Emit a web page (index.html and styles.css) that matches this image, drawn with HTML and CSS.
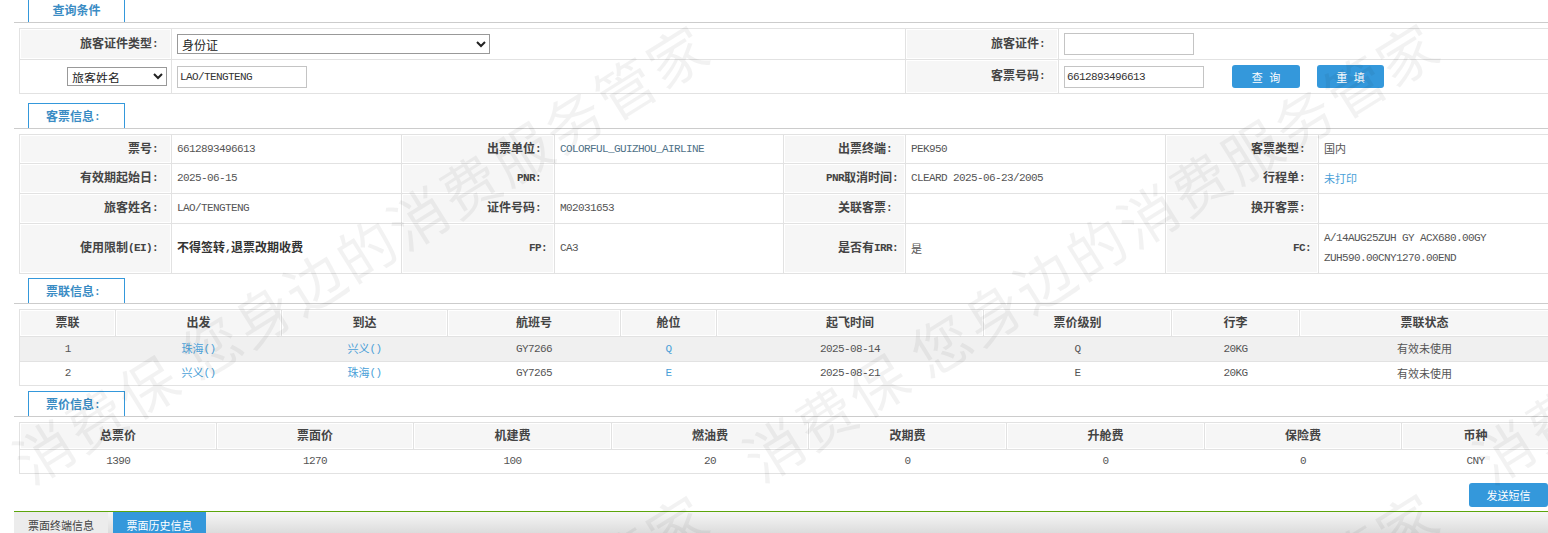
FILE: index.html
```html
<!DOCTYPE html>
<html lang="zh">
<head>
<meta charset="utf-8">
<title>客票信息</title>
<link rel="stylesheet" href="styles.css">
</head>
<body>
<div class="page">
  <div class="sec-head first"><div class="tab">查询条件</div></div>
  <table class="grid t1">
    <colgroup><col class="w152"><col class="w734"><col class="w153"><col class="w491"></colgroup>
    <tr class="h31">
      <td class="lb">旅客证件类型<span class="l">:</span></td>
      <td class="val ctl"><select class="sel-wide"><option>身份证</option></select></td>
      <td class="lb">旅客证件<span class="l">:</span></td>
      <td class="val ctl"><input class="ipt ipt-a" type="text"></td>
    </tr>
    <tr class="h34">
      <td class="plain ctl"><select class="sel-name"><option>旅客姓名</option></select></td>
      <td class="val ctl"><input class="ipt ipt-b" type="text" value="LAO/TENGTENG"></td>
      <td class="lb">客票号码<span class="l">:</span></td>
      <td class="val ctl">
        <div class="actions">
          <input class="ipt ipt-c" type="text" value="6612893496613">
          <button class="btn btn-q" type="button">查 询</button>
          <button class="btn btn-r" type="button">重 填</button>
        </div>
      </td>
    </tr>
  </table>

  <div class="sec-head"><div class="tab tab-c">客票信息<span class="l">:</span></div></div>
  <table class="grid t2">
    <colgroup><col class="w152"><col class="w230"><col class="w153"><col class="w229"><col class="w122"><col class="w260"><col class="w153"><col class="w231"></colgroup>
    <tr class="h29">
      <td class="lb">票号<span class="l">:</span></td><td class="val"><span class="l">6612893496613</span></td>
      <td class="lb">出票单位<span class="l">:</span></td><td class="val"><span class="l unit">COLORFUL_GUIZHOU_AIRLINE</span></td>
      <td class="lb">出票终端<span class="l">:</span></td><td class="val"><span class="l">PEK950</span></td>
      <td class="lb">客票类型<span class="l">:</span></td><td class="val">国内</td>
    </tr>
    <tr class="h30">
      <td class="lb">有效期起始日<span class="l">:</span></td><td class="val"><span class="l">2025-06-15</span></td>
      <td class="lb"><span class="l">PNR:</span></td><td class="val"></td>
      <td class="lb wide-colon"><span class="l">PNR</span>取消时间<span class="l">:</span></td><td class="val"><span class="l">CLEARD 2025-06-23/2005</span></td>
      <td class="lb">行程单<span class="l">:</span></td><td class="val link">未打印</td>
    </tr>
    <tr class="h30">
      <td class="lb">旅客姓名<span class="l">:</span></td><td class="val"><span class="l">LAO/TENGTENG</span></td>
      <td class="lb">证件号码<span class="l">:</span></td><td class="val"><span class="l">M02031653</span></td>
      <td class="lb">关联客票<span class="l">:</span></td><td class="val"></td>
      <td class="lb">换开客票<span class="l">:</span></td><td class="val"></td>
    </tr>
    <tr class="h50">
      <td class="lb">使用限制<span class="l">(EI):</span></td><td class="val strong">不得签转<span class="l">,</span>退票改期收费</td>
      <td class="lb wide-colon"><span class="l">FP:</span></td><td class="val"><span class="l">CA3</span></td>
      <td class="lb wide-colon">是否有<span class="l">IRR:</span></td><td class="val">是</td>
      <td class="lb wide-colon"><span class="l">FC:</span></td>
      <td class="val fc"><div class="l">A/14AUG25ZUH GY ACX680.00GY</div><div class="l">ZUH590.00CNY1270.00END</div></td>
    </tr>
  </table>

  <div class="sec-head"><div class="tab tab-c">票联信息<span class="l">:</span></div></div>
  <table class="grid t3 center">
    <colgroup><col class="w96"><col class="w166"><col class="w166"><col class="w173"><col class="w96"><col class="w267"><col class="w188"><col class="w128"><col class="w250"></colgroup>
    <tr class="h27 head">
      <th>票联</th><th>出发</th><th>到达</th><th>航班号</th><th>舱位</th><th>起飞时间</th><th>票价级别</th><th>行李</th><th>票联状态</th>
    </tr>
    <tr class="h25 alt">
      <td><span class="l">1</span></td><td class="link">珠海<span class="l">()</span></td><td class="link">兴义<span class="l">()</span></td><td><span class="l">GY7266</span></td><td class="link"><span class="l">Q</span></td><td><span class="l">2025-08-14</span></td><td><span class="l">Q</span></td><td><span class="l">20KG</span></td><td>有效未使用</td>
    </tr>
    <tr class="h24">
      <td><span class="l">2</span></td><td class="link">兴义<span class="l">()</span></td><td class="link">珠海<span class="l">()</span></td><td><span class="l">GY7265</span></td><td class="link"><span class="l">E</span></td><td><span class="l">2025-08-21</span></td><td><span class="l">E</span></td><td><span class="l">20KG</span></td><td>有效未使用</td>
    </tr>
  </table>

  <div class="sec-head"><div class="tab tab-c">票价信息<span class="l">:</span></div></div>
  <table class="grid t4 center">
    <colgroup><col class="w197"><col class="w197"><col class="w198"><col class="w197"><col class="w198"><col class="w198"><col class="w197"><col class="w148"></colgroup>
    <tr class="h27 head">
      <th>总票价</th><th>票面价</th><th>机建费</th><th>燃油费</th><th>改期费</th><th>升舱费</th><th>保险费</th><th>币种</th>
    </tr>
    <tr class="h24">
      <td><span class="l">1390</span></td><td><span class="l">1270</span></td><td><span class="l">100</span></td><td><span class="l">20</span></td><td><span class="l">0</span></td><td><span class="l">0</span></td><td><span class="l">0</span></td><td><span class="l">CNY</span></td>
    </tr>
  </table>

  <div class="send-row"><button class="btn btn-send" type="button">发送短信</button></div>

  <div class="bottom-tabs">
    <div class="btab">票面终端信息</div>
    <div class="btab on">票面历史信息</div>
  </div>
</div>

<div class="wm" aria-hidden="true">
  <div class="wm-line wm1">消费保 您身边的消费服务管家</div>
  <div class="wm-line wm2">消费保 您身边的消费服务管家</div>
  <div class="wm-line wm3">消费保 您身边的消费服务管家</div>
  <div class="wm-line wm4">消费保 您身边的消费服务管家</div>
  <div class="wm-line wm5">消费保 您身边的消费服务管家</div>
</div>
</body>
</html>
```
FILE: styles.css
```css
* { box-sizing: border-box; }
html, body { margin: 0; padding: 0; height: 533px; overflow: hidden; background: #fff; }
body {
  position: relative;
  font-family: "Noto Sans CJK SC", "Liberation Sans", sans-serif;
  font-size: 12px;
  line-height: 14px;
  color: #555;
}
.page { width: 1560px; padding-left: 14px; }
.l {
  font-family: "Liberation Mono", monospace; font-size: 11px; letter-spacing: -0.6px;
}
span.l { vertical-align: 1px; }

.sec-head { height: 26px; border-bottom: 1px solid #ccc; margin-top: 9px; padding-left: 14px; }
.sec-head.first { height: 23px; margin-top: 0; }
.tab {
  width: 97px; height: 25px;
  border: 1px solid #3498db; border-bottom: 0;
  background: #fff; color: #3a8cc4; font-weight: 700;
  text-align: center; line-height: 24px;
}
.tab-c { padding-right: 7px; }
.first .tab { height: 22px; border-top: 0; line-height: 20px; }
.sec-head + .grid { margin-top: 5px; }

.grid {
  width: 1530px; margin-left: 5px;
  border-collapse: collapse; table-layout: fixed;
}
.grid td, .grid th {
  border: 1px solid #e2e2e2; padding: 0 5px 2px; overflow: hidden; white-space: nowrap; font-size: 11px;
}
.grid + .sec-head { margin-top: 5px; }
.t1 + .sec-head { margin-top: 9px; }
.t2 + .sec-head { margin-top: 4px; }
.t3 + .sec-head { margin-top: 5px; }

.grid .lb, .grid .head th { font-size: 12px; }
.lb {
  background: #f6f6f6; color: #444; font-weight: 700; text-align: right;
  box-shadow: inset 0 0 0 1px #fff;
}
.grid .lb { padding-right: 13px; }
.grid .wide-colon { padding-right: 7px; }
.grid .plain { text-align: right; padding-right: 4px; }
.grid .ctl { padding-bottom: 0; }
.grid .strong { font-weight: 700; color: #333; font-size: 12px; }
.fc .l { line-height: 20px; }
.unit { color: #4f7288; }
.link, .link .l { color: #4a9fd8; }
.center td { text-align: center; }
.center td + td { border-left: 0; }
.center td { border-right: 0; }
.head th {
  background: #f6f6f6; color: #444; font-weight: 700; text-align: center;
  box-shadow: inset 0 0 0 1px #fff;
}
.alt td { background: #f0f0f0; }

.h24 { height: 24px; } .h25 { height: 25px; } .h27 { height: 27px; } .h29 { height: 29px; }
.h30 { height: 30px; } .h31 { height: 31px; } .h34 { height: 34px; } .h50 { height: 50px; }

.w96 { width: 96px; } .w122 { width: 122px; } .w128 { width: 128px; } .w148 { width: 148px; }
.w152 { width: 152px; } .w153 { width: 153px; } .w166 { width: 166px; } .w173 { width: 173px; }
.w188 { width: 188px; } .w197 { width: 197px; } .w198 { width: 198px; } .w229 { width: 229px; }
.w230 { width: 230px; } .w231 { width: 231px; } .w250 { width: 250px; } .w260 { width: 260px; }
.w267 { width: 267px; } .w491 { width: 491px; } .w734 { width: 734px; }

select {
  display: block; background: #fff; color: #222; border: 1px solid #999;
  font-family: "Noto Sans CJK SC", sans-serif; font-size: 12px; border-radius: 0; padding: 0 0 2px;
}
.sel-wide { width: 313px; height: 20px; margin-top: -1px; }
.sel-name { width: 100px; height: 19px; margin-left: auto; margin-top: -1px; }
.ipt {
  display: block; height: 22px; border: 1px solid #c4c4c4; background: #fff; padding: 0 2px;
  font-family: "Liberation Mono", monospace; font-size: 11px; letter-spacing: -0.6px; color: #333; outline: 0;
}
.ipt-a { width: 130px; }
.ipt-b { width: 130px; }
.ipt-c { width: 140px; }
.actions { display: flex; align-items: center; }
.btn {
  border: 0; background: #3498db; color: #fff; border-radius: 3px;
  font-family: "Noto Sans CJK SC", sans-serif; font-size: 11px; padding: 0; display: block;
}
.btn-q { width: 68px; height: 23px; margin-left: 28px; word-spacing: 4px; }
.btn-r { width: 67px; height: 23px; margin-left: 17px; word-spacing: 4px; }
.send-row { display: flex; justify-content: flex-end; width: 1534px; margin-top: 9px; }
.btn-send { width: 79px; height: 24px; }

.bottom-tabs {
  margin-top: 4px; height: 22px; border-top: 1px solid #5ca50c; display: flex; gap: 5px;
  background: linear-gradient(#f6f6f6, #dcdcdc);
}
.btab { width: 94px; height: 21px; background: #ececec; color: #444; text-align: center; line-height: 26px; font-size: 11px; }
.btab.on { width: 93px; background: #3498db; color: #fff; }

.wm { position: absolute; inset: 0; overflow: hidden; pointer-events: none; }
.wm-line {
  position: absolute; white-space: nowrap; transform-origin: 0 50%; transform: rotate(-32deg);
  font-size: 58px; font-weight: 400; letter-spacing: 3px; word-spacing: -2px; line-height: 60px;
  color: rgba(0,0,0,.05);
}
.wm1 { left: 18px; top: 435px; }
.wm2 { left: 748px; top: 433px; }
.wm3 { left: 1478px; top: 435px; }
.wm4 { left: 18px; top: 905px; }
.wm5 { left: 748px; top: 903px; }
```
